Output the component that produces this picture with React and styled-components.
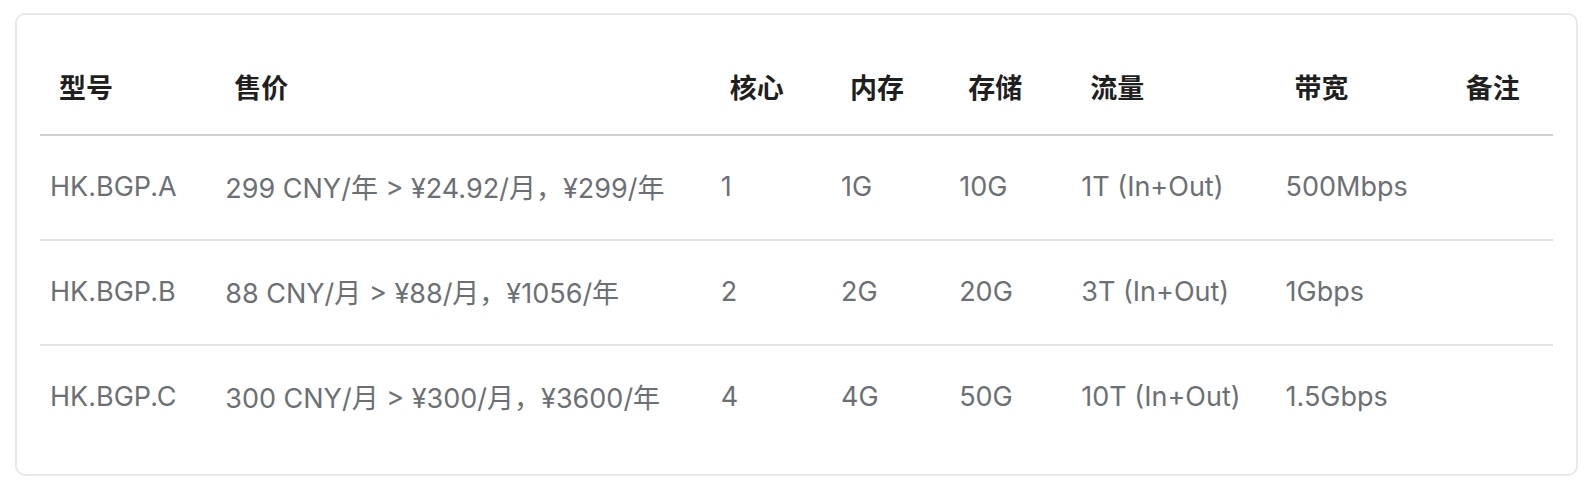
import React from "react";
import styled, { createGlobalStyle } from "styled-components";

const plans = [
  {
    model: "HK.BGP.A",
    price: "299 CNY/年 > ¥24.92/月，¥299/年",
    cpu: "1",
    ram: "1G",
    disk: "10G",
    traffic: "1T (In+Out)",
    bandwidth: "500Mbps",
    note: "",
  },
  {
    model: "HK.BGP.B",
    price: "88 CNY/月 > ¥88/月，¥1056/年",
    cpu: "2",
    ram: "2G",
    disk: "20G",
    traffic: "3T (In+Out)",
    bandwidth: "1Gbps",
    note: "",
  },
  {
    model: "HK.BGP.C",
    price: "300 CNY/月 > ¥300/月，¥3600/年",
    cpu: "4",
    ram: "4G",
    disk: "50G",
    traffic: "10T (In+Out)",
    bandwidth: "1.5Gbps",
    note: "",
  },
];

const columns = [
  { key: "model", label: "型号", width: 175 },
  { key: "price", label: "售价", width: 495 },
  { key: "cpu", label: "核心", width: 120 },
  { key: "ram", label: "内存", width: 118 },
  { key: "disk", label: "存储", width: 122 },
  { key: "traffic", label: "流量", width: 204 },
  { key: "bandwidth", label: "带宽", width: 171 },
  { key: "note", label: "备注", width: 106 },
];

export default function App() {
  return (
    <>
      <GlobalStyle />
      <Page>
        <Card>
          <Table>
            <colgroup>
              {columns.map((c) => (
                <col key={c.key} style={{ width: c.width }} />
              ))}
            </colgroup>
            <thead>
              <tr>
                {columns.map((c) => (
                  <Th key={c.key}>{c.label}</Th>
                ))}
              </tr>
            </thead>
            <tbody>
              {plans.map((plan, i) => (
                <Row key={plan.model} $last={i === plans.length - 1}>
                  {columns.map((c) => (
                    <Td key={c.key}>{plan[c.key]}</Td>
                  ))}
                </Row>
              ))}
            </tbody>
          </Table>
        </Card>
      </Page>
    </>
  );
}

const GlobalStyle = createGlobalStyle`
  html, body {
    margin: 0;
    background: #ffffff;
  }
  body {
    font-family: Inter, "Noto Sans CJK SC", sans-serif;
  }
`;

const Page = styled.div`
  padding: 13px 14px 20px 15px;
`;

const Card = styled.div`
  border: 2px solid #e8e8e8;
  border-radius: 10px;
  padding: 23px 23px 25px;
  background: #fff;
`;

const Table = styled.table`
  width: 100%;
  border-collapse: collapse;
  table-layout: fixed;
`;

const Th = styled.th`
  height: 96px;
  padding: 0 0 0 19px;
  text-align: left;
  font-size: 27px;
  font-weight: 700;
  color: #1f1f1f;
  border-bottom: 2px solid #d0d0d0;
`;

const Row = styled.tr`
  border-bottom: ${(p) => (p.$last ? "none" : "2px solid #e3e3e3")};
`;

const Td = styled.td`
  height: 101px;
  padding: 0 0 2px 10px;
  font-size: 27px;
  color: #6c7075;
  white-space: nowrap;
`;
